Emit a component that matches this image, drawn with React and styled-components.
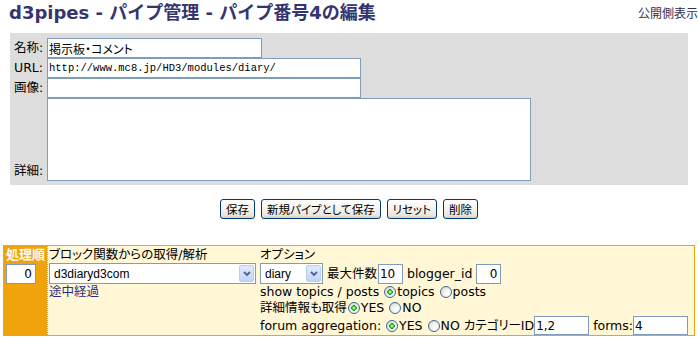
import React from "react";
import styled, { createGlobalStyle } from "styled-components";

const Global = createGlobalStyle`
  html, body { margin: 0; padding: 0; background: #ffffff; overflow: hidden; }
  body {
    font-family: "DejaVu Sans", "Noto Sans CJK JP", sans-serif;
    font-size: 12.5px;
    color: #000;
    font-feature-settings: "palt";
  }
`;

const Page = styled.div`
  width: 698px;
  height: 340px;
  overflow: hidden;
`;

const Header = styled.header`
  height: 33px;
  box-sizing: border-box;
  padding-left: 9px;
  display: flex;
  justify-content: space-between;
  align-items: flex-start;
`;

const Title = styled.h1`
  margin: 2px 0 0;
  font-size: 18px;
  line-height: 22px;
  font-weight: bold;
  color: #34346f;
  white-space: nowrap;
  font-feature-settings: normal;
`;

const PublicLink = styled.a`
  margin: 7px 0 0 0;
  font-size: 12px;
  line-height: 14px;
  color: #2f2f55;
  text-decoration: none;
  white-space: nowrap;
  font-feature-settings: normal;
`;

const Panel = styled.div`
  margin-left: 10px;
  width: 678px;
  box-sizing: border-box;
  padding: 5px 0 4px 4px;
  background: #dddddd;
  display: grid;
  grid-template-columns: 33px max-content;
  align-items: end;
`;

const FieldLabel = styled.label`
  font-size: 12.5px;
  line-height: 20px;
  white-space: nowrap;
`;

const TextInput = styled.input`
  display: ${(p) => (p.$inline ? "inline-block" : "block")};
  vertical-align: bottom;
  box-sizing: border-box;
  width: ${(p) => p.$w}px;
  height: ${(p) => p.$h || 20}px;
  margin: 0 ${(p) => p.$mr || 0}px 0 ${(p) => p.$ml || 0}px;
  padding: 0 ${(p) => (p.$align === "right" ? 3 : 1)}px 0 1px;
  border: 1px solid #7f9db9;
  border-radius: 0;
  background: #ffffff;
  color: #000;
  outline: none;
  text-align: ${(p) => p.$align || "left"};
  font-family: ${(p) =>
    p.$mono
      ? `"Liberation Mono", monospace`
      : `"DejaVu Sans", "Noto Sans CJK JP", sans-serif`};
  font-size: ${(p) => (p.$mono ? "10.5px" : "12px")};
  font-feature-settings: "palt";
`;

const TextArea = styled.textarea`
  display: block;
  box-sizing: border-box;
  width: 484px;
  height: 83px;
  margin: 0;
  border: 1px solid #7f9db9;
  border-radius: 0;
  background: #fff;
  resize: none;
  outline: none;
`;

const ButtonRow = styled.div`
  display: flex;
  justify-content: center;
  gap: 6px;
  margin: 14px 0 26px;
`;

const Button = styled.button`
  height: 20px;
  margin: 0;
  padding: 0 5px;
  border: 1px solid #003c74;
  border-radius: 3px;
  background: linear-gradient(#ffffff, #f5f4ef 45%, #e8e6dd 85%, #d6d0c5);
  font-family: "Noto Sans CJK JP", sans-serif;
  font-size: 11.5px;
  line-height: 18px;
  color: #000;
  font-feature-settings: "palt";
  white-space: nowrap;
`;

const PipeTable = styled.div`
  margin-left: 3px;
  width: 692px;
  height: 91px;
  box-sizing: border-box;
  border: 1px solid #f0a30a;
  background: #fff7d6;
  display: grid;
  grid-template-columns: 43px 212px 1fr;
`;

const OrderCell = styled.div`
  background: #f0a30a;
  padding-left: 2px;
`;

const Cell = styled.div`
  padding-left: 1px;
  border-left: ${(p) => (p.$dotted ? "1px dotted #e2a020" : "none")};
  min-width: 0;
`;

const Line = styled.div`
  height: ${(p) => p.$h}px;
  line-height: ${(p) => p.$h}px;
  white-space: nowrap;
`;

const OrderHead = styled.span`
  color: #ffffff;
  font-weight: bold;
  font-size: 13px;
`;

const SubLink = styled.a`
  color: #2d2d86;
  text-decoration: none;
`;

const SelectWrap = styled.span`
  position: relative;
  display: inline-block;
  vertical-align: bottom;
  width: ${(p) => p.$w}px;
  height: 21px;
`;

const Select = styled.select`
  appearance: none;
  -webkit-appearance: none;
  display: block;
  width: 100%;
  height: 100%;
  box-sizing: border-box;
  margin: 0;
  padding: 0 0 0 4px;
  border: 1px solid #7f9db9;
  border-radius: 0;
  background: #ffffff;
  color: #000;
  font-family: "Liberation Sans", sans-serif;
  font-size: 12px;
  outline: none;
`;

const SelectArrow = styled.span`
  position: absolute;
  top: 2px;
  bottom: 2px;
  right: 2px;
  width: 15px;
  box-sizing: border-box;
  border: 1px solid #bccdf2;
  border-radius: 2px;
  background: linear-gradient(#e2eafd, #c3d3f8);
  display: flex;
  align-items: center;
  justify-content: center;
  pointer-events: none;
`;

const Radio = styled.input.attrs({ type: "radio" })`
  appearance: none;
  -webkit-appearance: none;
  width: 12px;
  height: 12px;
  margin: 0 1px 0 1px;
  box-sizing: border-box;
  border: 1px solid #3f6894;
  border-radius: 50%;
  vertical-align: middle;
  position: relative;
  top: -1px;
  background: radial-gradient(circle at 65% 65%, #ffffff 0%, #f1f1ec 45%, #cfcfc6 100%);
  &:checked {
    background:
      radial-gradient(circle, #8cf08a 0 1px, #2bb02a 2px, #1f961f 2.6px, transparent 3px),
      radial-gradient(circle at 65% 65%, #ffffff 0%, #f1f1ec 45%, #cfcfc6 100%);
  }
`;

const Chevron = () => (
  <svg width="8" height="6" viewBox="0 0 8 6">
    <path d="M1 1 L4 4 L7 1" stroke="#4d6185" strokeWidth="1.8" fill="none" />
  </svg>
);

const Dropdown = ({ w, value }) => (
  <SelectWrap $w={w}>
    <Select defaultValue={value}>
      <option value={value}>{value}</option>
    </Select>
    <SelectArrow>
      <Chevron />
    </SelectArrow>
  </SelectWrap>
);

export default function App() {
  return (
    <Page>
      <Global />
      <Header>
        <Title>d3pipes - パイプ管理 - パイプ番号4の編集</Title>
        <PublicLink href="#">公開側表示</PublicLink>
      </Header>

      <Panel>
        <FieldLabel>名称:</FieldLabel>
        <TextInput $w={215} defaultValue="掲示板・コメント" />
        <FieldLabel>URL:</FieldLabel>
        <TextInput $w={314} $mono defaultValue="http://www.mc8.jp/HD3/modules/diary/" />
        <FieldLabel>画像:</FieldLabel>
        <TextInput $w={314} defaultValue="" />
        <FieldLabel>詳細:</FieldLabel>
        <TextArea defaultValue="" />
      </Panel>

      <ButtonRow>
        <Button>保存</Button>
        <Button>新規パイプとして保存</Button>
        <Button>リセット</Button>
        <Button>削除</Button>
      </ButtonRow>

      <PipeTable>
        <OrderCell>
          <Line $h={17}>
            <OrderHead>処理順</OrderHead>
          </Line>
          <Line $h={21}>
            <TextInput $inline $w={30} $align="right" defaultValue="0" />
          </Line>
        </OrderCell>

        <Cell $dotted>
          <Line $h={17}>ブロック関数からの取得/解析</Line>
          <Line $h={21}>
            <Dropdown w={207} value="d3diaryd3com" />
          </Line>
          <Line $h={16}>
            <SubLink href="#">途中経過</SubLink>
          </Line>
        </Cell>

        <Cell>
          <Line $h={17}>オプション</Line>
          <Line $h={21}>
            <Dropdown w={63} value="diary" /> 最大件数
            <TextInput $inline $w={25} $ml={1} defaultValue="10" /> blogger_id{" "}
            <TextInput $inline $w={25} $align="right" defaultValue="0" />
          </Line>
          <Line $h={16}>
            show topics / posts <Radio name="tp" defaultChecked />
            topics <Radio name="tp" />
            posts
          </Line>
          <Line $h={16}>
            詳細情報も取得<Radio name="dt" defaultChecked />
            YES <Radio name="dt" />
            NO
          </Line>
          <Line $h={19}>
            forum aggregation: <Radio name="fa" defaultChecked />
            YES <Radio name="fa" />
            NO カテゴリーID
            <TextInput $inline $w={55} $h={19} defaultValue="1,2" /> forms:
            <TextInput $inline $w={55} $h={19} defaultValue="4" />
          </Line>
        </Cell>
      </PipeTable>
    </Page>
  );
}
